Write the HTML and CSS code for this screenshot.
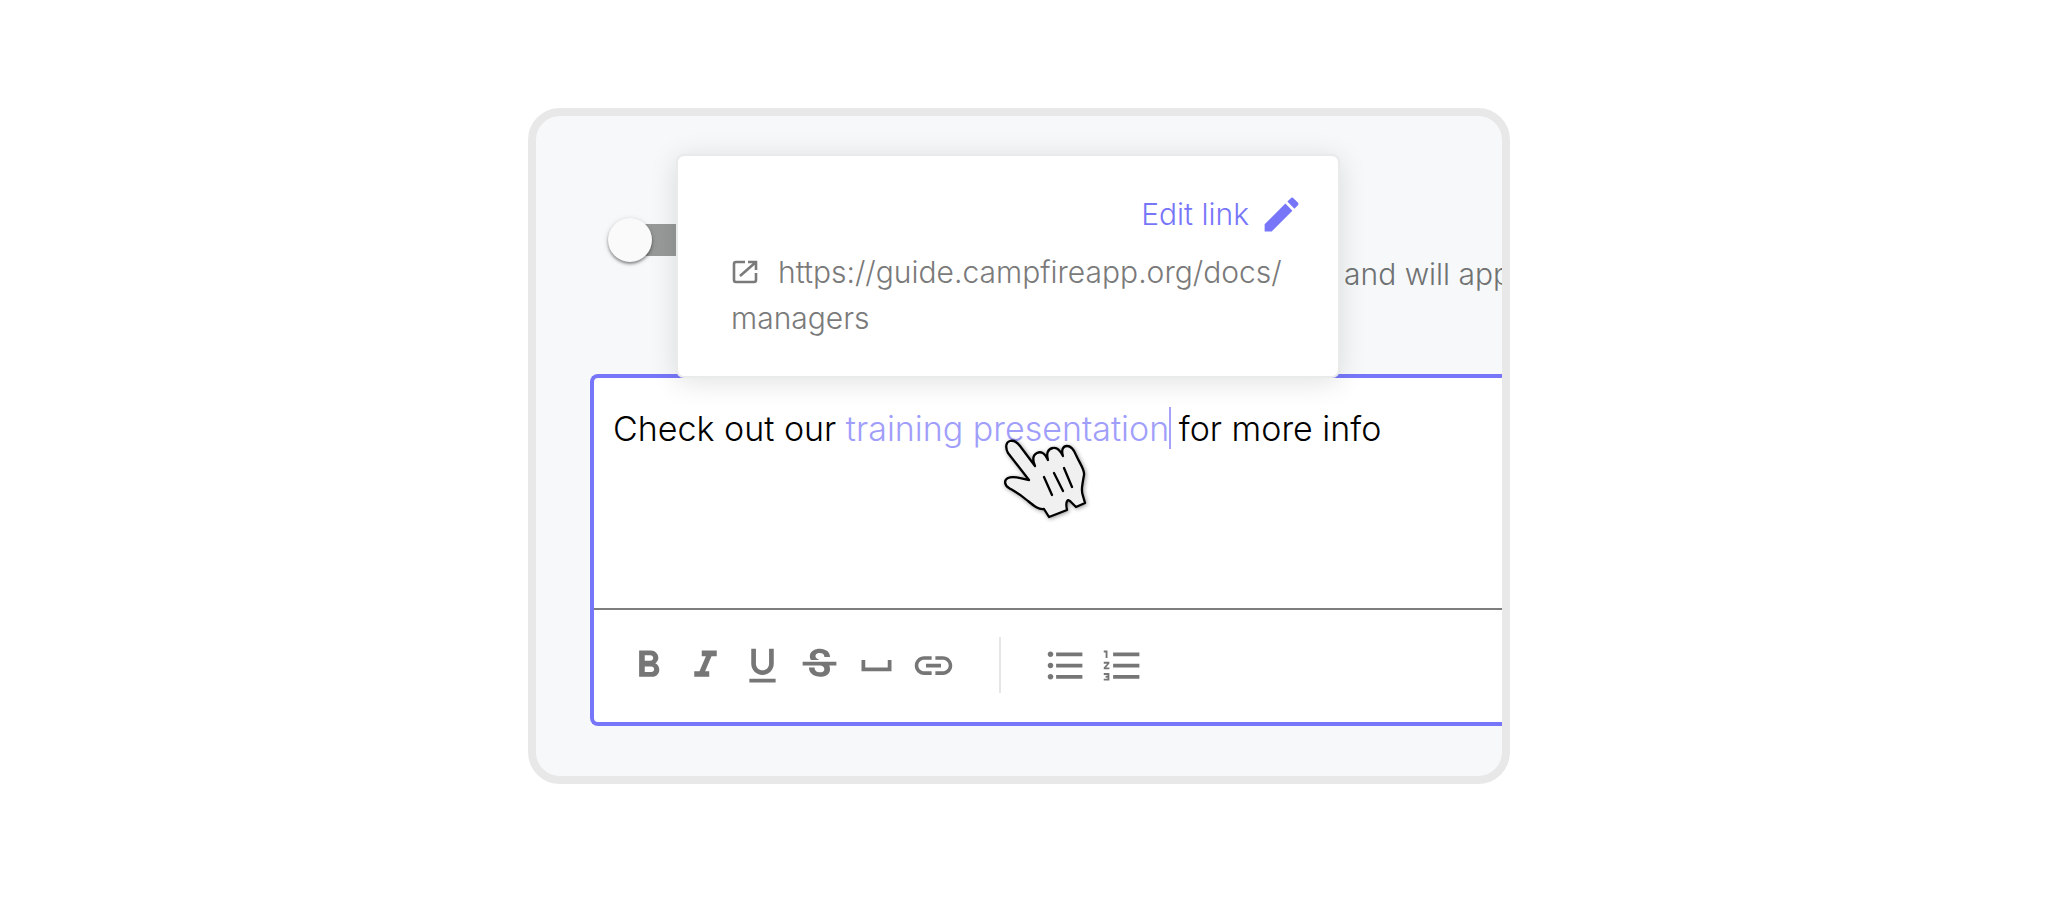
FILE: index.html
```html
<!DOCTYPE html>
<html lang="en">
<head>
<meta charset="utf-8">
<title>Edit link</title>
<link rel="stylesheet" href="styles.css">
</head>
<body>
<main class="stage">
  <section class="card">
    <div class="setting">
      <input class="switch" type="checkbox" role="switch" id="visible" aria-labelledby="visible-text">
      <label class="setting-text" id="visible-text" for="visible">and will app</label>
    </div>
    <div class="editor">
      <div class="text" role="textbox" aria-label="Message" contenteditable="true" spellcheck="false">Check out our <a class="link" href="#managers">training presentation<span class="caret"></span></a> for more info</div>
      <div class="toolbar" role="toolbar" aria-label="Formatting">
        <button class="tool" type="button" aria-label="Bold"><svg class="icon" viewBox="0 0 24 24"><path d="M15.6 10.79c.97-.67 1.65-1.77 1.65-2.79 0-2.26-1.75-4-4-4H7v14h7.04c2.09 0 3.71-1.7 3.71-3.79 0-1.52-.86-2.82-2.15-3.42zM10 6.5h3c.83 0 1.5.67 1.5 1.5s-.67 1.5-1.5 1.5h-3v-3zm3.5 9H10v-3h3.5c.83 0 1.5.67 1.5 1.5s-.67 1.5-1.5 1.5z"/></svg></button>
        <button class="tool" type="button" aria-label="Italic"><svg class="icon" viewBox="0 0 24 24"><path d="M10 4v3h2.21l-3.42 8H6v3h8v-3h-2.21l3.42-8H18V4z"/></svg></button>
        <button class="tool" type="button" aria-label="Underline"><svg class="icon" viewBox="0 0 24 24"><path d="M12 17c3.31 0 6-2.69 6-6V3h-2.5v8c0 1.93-1.57 3.5-3.5 3.5S8.5 12.93 8.5 11V3H6v8c0 3.31 2.69 6 6 6zm-7 2v2h14v-2H5z"/></svg></button>
        <button class="tool" type="button" aria-label="Strikethrough"><svg class="icon" viewBox="0 0 24 24"><path d="M6.85 7.08C6.85 4.37 9.45 3 12.24 3c1.64 0 3 .49 3.9 1.28.77.65 1.46 1.73 1.46 3.24h-3.01c0-.31-.05-.59-.15-.85-.29-.86-1.2-1.28-2.25-1.28-1.86 0-2.34 1.02-2.34 1.7 0 .48.25.88.74 1.21.38.25.77.48 1.41.7H7.39c-.21-.34-.54-.89-.54-1.92zM21 12v-2H3v2h9.62c1.15.45 1.96.75 1.96 1.97 0 1-.81 1.67-2.28 1.67-1.54 0-2.93-.54-2.93-2.51H6.4c0 .55.08 1.13.24 1.58.81 2.29 3.29 3.3 5.67 3.3 2.27 0 5.3-.89 5.3-4.05 0-.3-.01-1.16-.48-1.94H21z"/></svg></button>
        <button class="tool" type="button" aria-label="Space"><svg class="icon" viewBox="0 0 24 24"><path d="M18 9v4H6V9H4v6h16V9z"/></svg></button>
        <button class="tool" type="button" aria-label="Link"><svg class="icon" viewBox="0 0 24 24"><path d="M3.9 12c0-1.71 1.39-3.1 3.1-3.1h4V7H7c-2.76 0-5 2.24-5 5s2.24 5 5 5h4v-1.9H7c-1.71 0-3.1-1.39-3.1-3.1zM8 13h8v-2H8v2zm9-6h-4v1.9h4c1.71 0 3.1 1.39 3.1 3.1s-1.39 3.1-3.1 3.1h-4V17h4c2.76 0 5-2.24 5-5s-2.24-5-5-5z"/></svg></button>
        <span class="separator"></span>
        <button class="tool" type="button" aria-label="Bulleted list"><svg class="icon" viewBox="0 0 24 24"><path d="M4 10.5c-.83 0-1.5.67-1.5 1.5s.67 1.5 1.5 1.5 1.5-.67 1.5-1.5-.67-1.5-1.5-1.5zm0-6c-.83 0-1.5.67-1.5 1.5S3.17 7.5 4 7.5 5.5 6.83 5.5 6 4.83 4.5 4 4.5zm0 12c-.83 0-1.5.68-1.5 1.5s.68 1.5 1.5 1.5 1.5-.68 1.5-1.5-.67-1.5-1.5-1.5zM7 19h14v-2H7v2zm0-6h14v-2H7v2zm0-8v2h14V5H7z"/></svg></button>
        <button class="tool" type="button" aria-label="Numbered list"><svg class="icon" viewBox="0 0 24 24"><path d="M2 17h2v.5H3v1h1v.5H2v1h3v-4H2v1zm1-9h1V4H2v1h1v3zm-1 3h1.8L2 13.1v.9h3v-1H3.2L5 10.9V10H2v1zm5-6v2h14V5H7zm0 14h14v-2H7v2zm0-6h14v-2H7v2z"/></svg></button>
      </div>
    </div>
    <div class="popover" role="dialog" aria-label="Link">
      <button class="edit" type="button">Edit link<svg class="icon" viewBox="0 0 24 24"><path d="M3 17.25V21h3.75L17.81 9.94l-3.75-3.75L3 17.25zM20.71 7.04c.39-.39.39-1.02 0-1.41l-2.34-2.34c-.39-.39-1.02-.39-1.41 0l-1.83 1.83 3.75 3.75 1.83-1.83z"/></svg></button>
      <a class="url" href="#managers"><svg class="open" viewBox="0 0 28 24"><path d="M14 2H5Q3 2 3 4V20Q3 22 5 22H23Q25 22 25 20V13M17 2H25V10M25 2L9 16"/></svg>https://guide.campfireapp.org/docs/<wbr>managers</a>
    </div>
    <svg class="pointer" viewBox="0 0 84 82"><path d="M26 42L5 15C2 9 3 4 7 3C11 2 14 4 17 8L32 28C29 21 30 17 34 15C38 13 42 15 45 22C43 15 45 11 50 10C54 9 57 12 60 18C58 12 60 8 64 8C68 8 71 12 73 17C77 26 82 32 81 37C79 48 78 53 80 58L82 65L73 69L68 64C65 60 62 63 64 72L46 79L41 71C36 72 31 68 25 63C17 56 11 53 6 50C1 47 1 42 5 40C11 37 18 41 26 42ZM41 39L49 57M51 35L60 53M61 30L69 49"/></svg>
  </section>
</main>
</body>
</html>
```
FILE: styles.css
```css
* { box-sizing: border-box; }

body {
  margin: 0;
  background: #fff;
  font-family: Inter, sans-serif;
  font-weight: 350;
}

.stage {
  display: grid;
  grid-template-columns: 528fr 982fr 546fr;
  padding: 108px 0;
}

.card {
  grid-column: 2;
  min-width: 0;
  position: relative;
  overflow: hidden;
  padding: 102px 0 50px 54px;
  border: 8px solid #e8e8e8;
  border-radius: 32px;
  background: #f6f8fa;
}

.setting {
  display: flex;
  justify-content: space-between;
  padding: 0 0 78px 18px;
}

.switch {
  appearance: none;
  width: 88px;
  height: 44px;
  margin: 0;
  background: linear-gradient(#989a99, #989a99) 22px center / 66px 32px no-repeat;
}

.switch::before {
  content: "";
  display: block;
  width: 44px;
  height: 44px;
  border-radius: 50%;
  background: #fafafa;
  box-shadow: 0 2px 3px rgba(0, 0, 0, 0.4), 0 1px 6px rgba(0, 0, 0, 0.12);
}

.setting-text {
  width: 158px;
  padding-top: 34px;
  color: #707272;
  font-size: 30px;
  line-height: 44px;
  white-space: nowrap;
}

.editor {
  border: 4px solid #7776f9;
  border-right: 0;
  border-radius: 8px 0 0 8px;
  background: #fff;
}

.text {
  min-height: 230px;
  padding: 29px 19px;
  color: #000;
  font-size: 34px;
  line-height: 44px;
  white-space: nowrap;
  outline: 0;
}

.link {
  color: #a09efb;
  text-decoration: none;
}

.caret {
  display: inline-block;
  width: 2px;
  height: 42px;
  margin-right: -2px;
  vertical-align: -8px;
  background: #a4a2fb;
}

.toolbar {
  display: flex;
  align-items: center;
  gap: 12px;
  height: 114px;
  padding: 0 32px 2px;
  border-top: 2px solid #7e7e7e;
}

.tool {
  display: flex;
  padding: 0;
  border: 0;
  background: none;
  color: #767676;
}

.icon {
  width: 45px;
  height: 45px;
  fill: currentColor;
}

.separator {
  width: 2px;
  height: 56px;
  margin: 0 30px 0 31px;
  background: #e6e6e6;
}

.popover {
  position: absolute;
  top: 38px;
  left: 140px;
  width: 664px;
  padding: 35px 34px 35px 53px;
  border: 2px solid #e9eaea;
  border-radius: 8px;
  background: #fff;
  box-shadow: 0 4px 28px rgba(0, 0, 0, 0.12);
}

.edit {
  display: flex;
  align-items: center;
  gap: 10px;
  margin-left: auto;
  padding: 0;
  border: 0;
  background: none;
  color: #7776f9;
  font: 350 30px/46px Inter, sans-serif;
}

.url {
  display: block;
  padding-top: 12px;
  color: #7a7a7a;
  font-size: 30px;
  line-height: 46px;
  text-decoration: none;
}

.open {
  width: 28px;
  height: 24px;
  margin-right: 19px;
  vertical-align: -1px;
  fill: none;
  stroke: currentColor;
  stroke-width: 2.6;
}

.pointer {
  position: absolute;
  top: 322px;
  left: 467px;
  width: 84px;
  height: 82px;
  fill: #f0f0f0;
  stroke: #000;
  stroke-width: 2.3;
  stroke-linejoin: round;
  stroke-linecap: round;
  filter: drop-shadow(1px 1px 2px rgba(0, 0, 0, 0.4));
}
```
